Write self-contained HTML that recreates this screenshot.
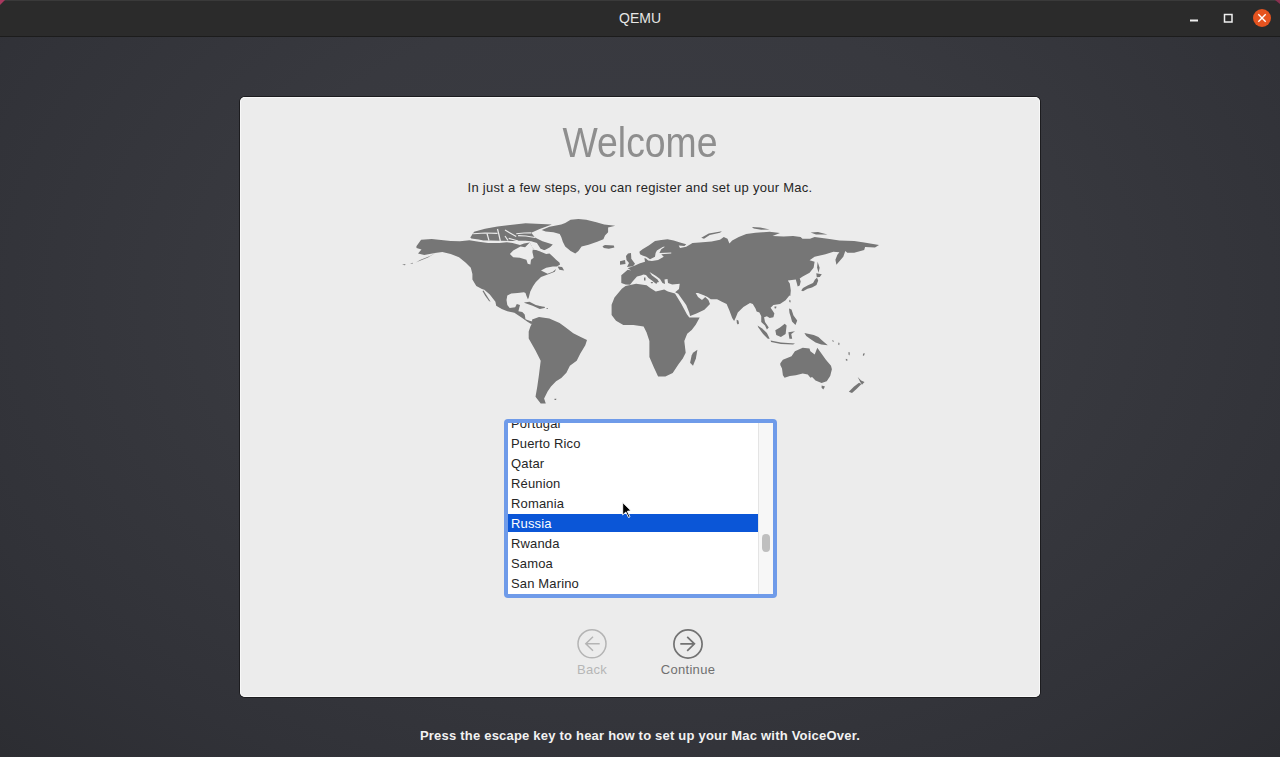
<!DOCTYPE html>
<html><head><meta charset="utf-8">
<style>
*{margin:0;padding:0;box-sizing:border-box}
html,body{width:1280px;height:757px;overflow:hidden;background:#333439;font-family:"Liberation Sans",sans-serif}
#tb{position:absolute;left:0;top:0;width:1280px;height:37px;background:#2b2b2b;border-bottom:1px solid #1c1c1c;border-top:1px solid #3a3a3a}
#tb .t{position:absolute;left:0;width:1280px;top:9px;text-align:center;color:#e6e6e6;font-size:14px;line-height:16px}
#bg{position:absolute;left:0;top:37px;width:1280px;height:720px;background:radial-gradient(ellipse 900px 650px at 640px 260px,#3b3c43 0%,#38393f 45%,#313238 80%,#2c2d32 100%)}
#panel{position:absolute;left:240px;top:97px;width:800px;height:600px;background:#ececec;border-radius:5px;box-shadow:0 0 0 1px #1c1c1f, inset 0 0 0 1px #f8f8f8}
.welcome{position:absolute;left:240px;width:800px;top:118.5px;text-align:center;font-size:42px;line-height:48px;color:#8e8e8e;letter-spacing:0px;transform:scaleX(0.89);transform-origin:400px 0}
.sub{position:absolute;left:240px;width:800px;top:180px;text-align:center;font-size:13px;line-height:16px;color:#262626;letter-spacing:0.28px}
#ring{position:absolute;left:504px;top:419px;width:273px;height:178.5px;border-radius:4px;background:#6f9be9}
#list{position:absolute;left:508px;top:423px;width:265px;height:171px;background:#fff;overflow:hidden}
#list .row{position:absolute;left:0;width:250px;height:20px;font-size:13px;color:#262626;padding-left:3px;line-height:20px;white-space:nowrap;letter-spacing:0.15px}
#list .selbg{position:absolute;left:0;top:91px;width:250px;height:18px;background:#0b56d7}
#sb{position:absolute;left:250px;top:0;width:15px;height:171px;background:#f7f7f7;border-left:1px solid #e4e4e4}
#thumb{position:absolute;left:3px;top:111px;width:8px;height:18px;border-radius:4px;background:#bfbfbf}
.lbl{position:absolute;font-size:13px;line-height:16px;text-align:center;width:120px;letter-spacing:0.3px}
#map{position:absolute;left:0;top:0}
.foot{position:absolute;left:0;width:1280px;top:728px;text-align:center;color:#f2f2f2;font-size:13px;line-height:16px;font-weight:bold;letter-spacing:0.21px}
svg.ic{position:absolute;left:0;top:0}
</style></head><body>
<div id="tb"><div class="t">QEMU</div></div>
<svg class="ic" width="1280" height="40" viewBox="0 0 1280 40">
<rect x="1190" y="19.5" width="8" height="2" fill="#f0f0f0"/>
<rect x="1224.5" y="14.5" width="7.5" height="7.5" fill="none" stroke="#f0f0f0" stroke-width="1.5"/>
<circle cx="1262" cy="18" r="9" fill="#e5531f"/>
<path d="M1258.3 14.3L1265.7 21.7M1265.7 14.3L1258.3 21.7" stroke="#fff" stroke-width="1.4"/>
</svg>

<div id="bg"></div>
<svg class="ic" width="1280" height="10" viewBox="0 0 1280 10"><path d="M0 0H5L0 5Z" fill="#a8385e"/><path d="M1280 0H1275L1280 4Z" fill="#8a3050"/></svg>

<div id="panel"></div>
<div class="welcome">Welcome</div>
<div class="sub">In just a few steps, you can register and set up your Mac.</div>
<svg id="map" width="1280" height="757" viewBox="0 0 1280 757"><defs><filter id="bl" x="0" y="0" width="1280" height="757" filterUnits="userSpaceOnUse"><feGaussianBlur stdDeviation="0.35"/></filter></defs><g filter="url(#bl)"><g fill="#767676"><polygon points="416.4,246.2 421.1,239.8 431.7,239.1 450.7,240.9 460,241.3 469.4,240.3 478.75,241.7 488.1,243.1 499.4,243.1 506.9,242.2 512.5,243.1 520,245 524,243.5 529.7,242.6 533,248.6 539.6,251.2 546.2,253.9 549.5,253.5 552.8,256.5 556.1,259.8 559.4,262.5 560.1,264.4 556.8,266.4 552.8,266.4 546.2,267.7 541,270.4 547.6,273.7 552.8,271.7 556.1,269.1 554.8,271.7 549,274 541,277 535.7,282.3 533,286.2 530.3,291.4 529.5,294.5 528.7,297.8 527.9,299.3 526.5,296 525.5,293 523.9,292.2 517.6,293 511.2,293.4 507.3,295.4 506.5,300.1 507.3,304.9 509.7,308 515.2,307.3 516.8,304.1 520,304.9 518.4,311.2 522.3,312 524.7,314.4 525.5,319.2 529.5,320.75 532.6,321.5 532.5,323.5 531.1,323.9 527.1,321.5 521.5,317.6 514.4,312.8 507.3,311.2 501.7,308.9 496.2,305.7 495.4,301.7 489.8,294.6 484.3,289.8 481.9,289 476.3,285.9 472.4,279.5 472.4,274 470.8,267.8 465.5,262.5 459,257.3 450.7,254 442.3,252 434.9,253 424.3,255.1 418,253.5 421.5,249.5 416.5,248"/><polygon points="470.3,237.5 474.1,231.8 485,228.8 497.5,226.5 507.8,225.2 525.6,223.25 551.9,224.4 539.7,229.1 531.25,232.8 535,237.5 542.5,241.25 552.8,244.5 550,247.3 544.4,250.2 540.6,248.75 536.9,243.1 531.25,241.25 525.6,240.8 518.1,240.8 512.5,241 499.4,240.8 490.9,240.6 483.4,240.6 478.75,239.5 471.25,238.4"/><polygon points="541.7,230 549.5,226.8 561.25,224.5 565.2,222.9 570.6,219.8 578.4,219 586.25,219.8 596.4,222.2 604.2,224.5 615.2,225.7 608.1,227.6 608.1,232.3 605,235.4 603.4,239.3 597.2,241.7 588.6,244.8 581.6,246.4 578.4,251 575.3,253.4 570.6,251 565.2,246.4 562.8,241.7 561.25,237 559.7,233.9 553.4,232.3 545.6,231.5"/><polygon points="602.5,246.3 605,245 613.8,245.6 614.4,247.5 608.8,248.8 603.8,248.1"/><polygon points="626,256 628,253.5 631,253 631.3,258.8 635,263.8 633,266.3 627,267 629,263 626.5,260"/><polygon points="620,261.3 625,260 625.5,264 620,264.8"/><polygon points="621.3,275.3 627.7,269.7 631.2,270.4 627.7,268.3 635,265.5 639.4,263.6 645,261.75 644.4,258 646,258.5 648.1,260.5 651.9,261.1 658.1,259.9 663.75,256.75 661.25,254.25 671.25,253.5 671.25,252.5 659.4,253 661.25,249.25 665,246.75 663.1,246.75 656.9,250.5 655.6,253 655,256.75 650,259.25 646.25,256.75 642.5,255.5 640,254.25 639.4,251.75 642.5,249.25 648.75,245.5 655,241.1 661.25,239.9 667.5,239.25 673.75,240.5 680,242.4 686.25,244.25 684.4,246.1 678.75,245.5 680,248 686.25,246.75 692.5,243 699.4,242.5 711.6,241.6 720,239.7 723.75,236.9 727.5,238.75 729.4,243.4 732.2,240.6 738.75,236.9 746.25,234.1 755.6,232.7 769.7,231.7 780,233.1 772.5,235.9 783.75,236.4 793.1,235.9 800.6,236.9 802.5,238.75 810,238.75 814.6,237 829.5,239 839.4,240.5 854.2,241 864.2,242.4 879,244.9 875,247.4 865.1,246.9 864.2,249.9 854.2,252.8 847.3,252.8 845.3,250.9 843.3,256.8 836.4,264.7 835.4,259.8 837.4,254.8 839.4,252.3 833.4,251.8 825.5,254.3 814.6,256.8 809.6,260.3 814.6,261.8 813.6,267.7 809.6,272.7 802.7,276.6 799.7,278.6 800.7,281.6 799.7,285.5 797.7,286.5 795.8,279.6 787.8,280.6 789.8,283.6 790.8,290.5 790.3,296 789.4,295.6 785.6,300.3 780,304.1 773.4,305 770.6,307.8 772.5,310.6 774.4,313.4 773.4,317.2 769.7,318.1 766.9,316.25 764.1,317.2 765,321.9 768.75,327.5 766.9,329.4 765,325.6 761.25,321.9 761.25,316.25 759.4,312.5 756.6,311.6 755.6,308.75 752.8,304.1 750,303.1 743.4,306.9 737.8,312.5 735.9,317.2 734.1,320.9 732.2,318.1 729.4,310.6 726.6,304.1 721.9,301.7 717.1,299.3 710.75,299.3 707.6,297 704.4,295.4 698,293 695.7,293 698,297 702,300.1 705.2,297 708.4,300.1 710,304.1 704.4,309.65 696.5,313.6 690.1,316 689.3,312.8 686.2,304.9 678.2,293.8 675.1,292.2 679,289 679.7,283.75 672.2,284.5 668,283 667.5,279 664.5,279.5 665,284 662.5,283 660,279 656,276 649.5,272 652,275.5 657.5,279.5 659,282 657,282.5 656.5,284 655,283 652,280.5 648.5,278 646,275 643.5,274.5 641,275.5 637,276.5 633,281 630,284.7 625.5,284.5 621.3,283"/><polygon points="625.5,285.9 636.1,283.8 646.6,285.2 650.2,288 655.8,291.5 664.2,289.4 667.9,291.4 675,293.4 681.4,304.1 687,314.4 689.3,317.6 699.7,317.6 695.7,324.7 691.7,330 687.2,333.8 684.3,341 685.7,352.7 682.8,358.5 678.5,364.3 672.7,373 665.4,376.6 658.1,376.6 653.8,367.2 649.4,357 649.4,349.8 649.4,341 646.5,332.3 643.6,326.5 633.4,325.1 623.3,325.1 616,320.7 611.6,314.9 611.6,304.7 614.5,297.4 621.8,288.7"/><polygon points="644,277.5 645.5,277.5 645.5,280.5 644,280.5"/><polygon points="650.5,282 653.2,282 652,283.8"/><polygon points="410,263.5 413,262.8 412.5,263.8"/><polygon points="402,264.8 405.5,264 405,265.2"/><polygon points="838.5,342.6 839.5,343 839.2,345.2 838.2,344.5"/><polygon points="848.5,352 849.8,352.5 849.5,355.5 848.5,354.5"/><polygon points="863.2,353.5 864.8,353.3 864,355.8 862.8,355.5"/><polygon points="845.8,358.8 847.5,359.5 847.2,361 845.8,360.2"/><polygon points="832,340 834,341 833,342"/><polygon points="774.5,306.5 776.5,306.5 776,308.5 774.5,308.2"/><polygon points="554.5,398.8 556.5,398.8 556,400 554.5,400"/><polygon points="539.5,306.3 544.5,306.8 545,308 540,308"/><polygon points="546.5,308 548,308 548,308.8 546.5,308.8"/><polygon points="693,352.7 697.4,349.8 695.9,358.5 693,365.7 690.1,362.8 691.6,355.6"/><polygon points="736.6,319.8 738.4,320.5 739,323.5 737.8,324.5 736.8,323"/><polygon points="532.1,319.5 539,316.9 549.3,318.6 559.6,322.9 566.4,328.1 573.3,333.2 580.2,336.7 587,340.1 585.3,345.2 580.2,353.8 576.7,360.7 569.9,365.8 566.4,372.7 561.3,377.9 556.1,381.3 551,386.4 547.6,391.6 544.1,398.5 545.8,403.6 540.7,403.6 535.5,396.7 537.3,386.4 539,374.4 540.7,360.7 535.5,350.4 528.7,338.4 528.7,331.5 530.4,326.4 532.1,322.9"/><polygon points="483.5,290.6 486.7,295.4 490.6,301.7 489,300.9 485,295.4 482.5,291"/><polygon points="437,252 430,256 420,260 415.8,262.5 418,261.5 428,257.5"/><polygon points="557.5,266.4 562.1,267.1 564.1,270.4 559.4,269.7"/><polygon points="523.9,302.5 529.5,301.7 535.8,304.9 539,305.7 544.5,308.1 539.8,308.9 532.6,305.7 525.5,303.3"/><polygon points="817,277.8 818.2,280.5 816.5,285 812,287.5 807.5,288.7 803,291.2 801.2,290.5 803,288 808,285.2 813,283 815,279.5"/><polygon points="816.3,273.3 821.8,274.2 819.8,277 816.8,277.3"/><polygon points="817.6,261.8 819.6,267.7 818.6,272.7 817.1,267.7"/><polygon points="789.4,299.8 790.6,300.5 790.5,302.6 789.3,302"/><polygon points="789,308.5 791.5,309.5 793.5,315.5 797.2,320.5 795.5,325 792,321.5 790.8,317 789.5,313"/><polygon points="757.5,325.6 762.2,328.4 766.9,333.1 769.7,338.75 767.8,338.75 763.1,334.1 758.4,327.5"/><polygon points="770.6,340.6 780.9,342.5 795,343.4 793.1,344.4 780.9,343.9 771.1,342"/><polygon points="775.3,330.3 780,327.5 784.7,323.75 786.6,325.6 785.6,334.1 780.9,336.9 776.25,335"/><polygon points="788.4,332.2 795,331.25 791.25,334.1 792.2,338.75 789.4,338.75"/><polygon points="804.4,333.1 813.75,335 818.4,336.9 822.2,340.6 827.8,345.3 821.25,344.4 815.6,342.5 810,338.75 806.25,335.9"/><polygon points="780.3,363.2 782.9,359.8 791.5,356.3 794.9,351.2 802.7,347.7 809.5,348.6 810.4,351.2 814.7,354.6 817.3,347.7 821.6,353.75 825.9,359.8 831,365.8 831.9,369.2 830.2,376.1 826.7,381.25 821.6,383 815.5,380.4 812.1,377 810.4,377.8 807.8,374.4 802.7,373.5 795.8,375.2 789.8,376.1 784.6,377.8 782.9,375.2 782,368.4 780.3,364.9"/><polygon points="821.6,385.5 825,386.4 823.3,389.4 821.6,387.7"/><polygon points="857.7,377 861.1,380.4 864.5,382.1 862,384.7 860.2,382.1 859,379.5"/><polygon points="861.5,384 856.5,389 852,393 848.8,391.8 853.8,386.8 859,382.8"/><polygon points="701.25,237.8 708.75,233.6 721.9,231.25 720,232.65 709.7,235 704,238.75"/><polygon points="751.9,227 760.3,227.5 769.7,229.4 761.25,229.8 753.75,228.4"/><polygon points="810.6,232.6 818,232 827.5,234.5 816,234.5"/></g><g fill="#ececec"><polygon points="509.9,253.9 513.2,250.6 520.5,246.6 525.1,247.3 529.7,242.6 533,247.9 532.4,251.9 533.7,257.8 531,259.8 530.4,264.4 527.7,263.8 526.4,259.8 519.8,257.8 513.2,257.2"/><polygon points="531.7,249.5 539.6,250.5 546.2,252.5 549.5,253 548.2,250.8 543,249.9 533,248.6"/></g><g fill="none" stroke="#ececec" stroke-width="1.2"><polyline points="473.1,233.75 485,233 497.5,233.3"/><polyline points="497.5,229 499,235 500.3,241"/><polyline points="505,230 510,233 516.25,236.6"/><polyline points="516.25,233.75 524,233 531.25,232.8"/><polyline points="508.75,238.4 513,239.5 518.1,241"/><polyline points="518.1,235.6 526,236 535,237.5"/><polyline points="487,233.5 489,240.5"/><polyline points="505,236 508,240.5"/></g></g></svg>
<div id="ring"></div>
<div id="list">
<div class="selbg"></div>
<div class="row" style="top:-9px">Portugal</div>
<div class="row" style="top:11px">Puerto Rico</div>
<div class="row" style="top:31px">Qatar</div>
<div class="row" style="top:51px">Réunion</div>
<div class="row" style="top:71px">Romania</div>
<div class="row" style="top:91px;color:#fff">Russia</div>
<div class="row" style="top:111px">Rwanda</div>
<div class="row" style="top:131px">Samoa</div>
<div class="row" style="top:151px">San Marino</div>
<div id="sb"><div id="thumb"></div></div>
</div>
<svg class="ic" width="1280" height="757" viewBox="0 0 1280 757">
<g fill="none" stroke="#b4b4b4" stroke-width="1.5">
<circle cx="592" cy="643.8" r="14"/>
<path d="M585.8 643.8H599.7M593 636.8L585.8 643.8L593 650.8"/>
</g>
<g fill="none" stroke="#727272" stroke-width="1.7">
<circle cx="688" cy="644" r="14.1"/>
<path d="M680.3 643.8H694.4M687.2 636.8L694.4 643.8L687.2 650.8"/>
</g>
</svg>
<div class="lbl" style="left:532px;top:662px;color:#b6b6b6">Back</div>
<div class="lbl" style="left:628px;top:662px;color:#707070">Continue</div>
<svg class="ic" width="1280" height="757" viewBox="0 0 1280 757">
<path d="M622.7 502.5L631 510.8L627.3 511.3L630 516.8L628.5 517.5L625.8 512L622.7 515Z" fill="#000" stroke="#fff" stroke-width="0.9" stroke-linejoin="round"/>
</svg>
<div class="foot">Press the escape key to hear how to set up your Mac with VoiceOver.</div>
</body></html>
